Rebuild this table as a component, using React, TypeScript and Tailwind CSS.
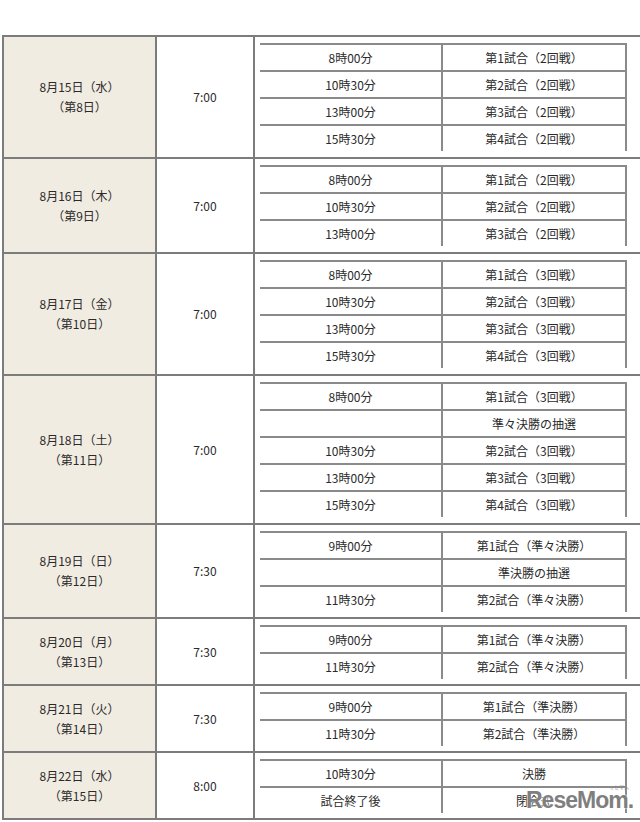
import React from 'react';

type Day = {
  date: string;
  nth: string;
  open: string;
  games: [string, string][];
};

const days: Day[] = [
  {
    date: '8月15日（水）',
    nth: '（第8日）',
    open: '7:00',
    games: [
      ['8時00分', '第1試合（2回戦）'],
      ['10時30分', '第2試合（2回戦）'],
      ['13時00分', '第3試合（2回戦）'],
      ['15時30分', '第4試合（2回戦）'],
    ],
  },
  {
    date: '8月16日（木）',
    nth: '（第9日）',
    open: '7:00',
    games: [
      ['8時00分', '第1試合（2回戦）'],
      ['10時30分', '第2試合（2回戦）'],
      ['13時00分', '第3試合（2回戦）'],
    ],
  },
  {
    date: '8月17日（金）',
    nth: '（第10日）',
    open: '7:00',
    games: [
      ['8時00分', '第1試合（3回戦）'],
      ['10時30分', '第2試合（3回戦）'],
      ['13時00分', '第3試合（3回戦）'],
      ['15時30分', '第4試合（3回戦）'],
    ],
  },
  {
    date: '8月18日（土）',
    nth: '（第11日）',
    open: '7:00',
    games: [
      ['8時00分', '第1試合（3回戦）'],
      ['', '準々決勝の抽選'],
      ['10時30分', '第2試合（3回戦）'],
      ['13時00分', '第3試合（3回戦）'],
      ['15時30分', '第4試合（3回戦）'],
    ],
  },
  {
    date: '8月19日（日）',
    nth: '（第12日）',
    open: '7:30',
    games: [
      ['9時00分', '第1試合（準々決勝）'],
      ['', '準決勝の抽選'],
      ['11時30分', '第2試合（準々決勝）'],
    ],
  },
  {
    date: '8月20日（月）',
    nth: '（第13日）',
    open: '7:30',
    games: [
      ['9時00分', '第1試合（準々決勝）'],
      ['11時30分', '第2試合（準々決勝）'],
    ],
  },
  {
    date: '8月21日（火）',
    nth: '（第14日）',
    open: '7:30',
    games: [
      ['9時00分', '第1試合（準決勝）'],
      ['11時30分', '第2試合（準決勝）'],
    ],
  },
  {
    date: '8月22日（水）',
    nth: '（第15日）',
    open: '8:00',
    games: [
      ['10時30分', '決勝'],
      ['試合終了後', '閉会式'],
    ],
  },
];

// one day of the schedule: date cell, opening time, nested game table
function DayRow({ day, tight }: { day: Day; tight?: boolean }) {
  return (
    <div className="flex border-b-2 border-[#7c7c7c]">
      <div className="w-[153px] shrink-0 bg-[#f1ece2] border-r-2 border-[#7c7c7c] flex flex-col items-center justify-center leading-[20px]">
        <span>{day.date}</span>
        <span>{day.nth}</span>
      </div>
      <div className="w-[98px] shrink-0 border-r-2 border-[#7c7c7c] flex items-center justify-center">
        {day.open}
      </div>
      <div className={tight ? 'flex-1 pl-[5px] pt-[6px] pb-[5px]' : 'flex-1 pl-[5px] pt-[6px] pb-[6px]'}>
        <div className="w-[367px]">
          {day.games.map(([time, label], i) => (
            <div key={i} className="flex h-[27px] border-t-2 border-[#8a8a8a]">
              <div className="w-[183px] border-r-2 border-[#8a8a8a] flex items-center justify-center">
                {time}
              </div>
              <div className="w-[184px] border-r-2 border-[#8a8a8a] flex items-center justify-center">
                {label}
              </div>
            </div>
          ))}
        </div>
      </div>
    </div>
  );
}

export default function App() {
  return (
    <div
      className="relative w-[640px] h-[822px] overflow-hidden bg-white text-[12px] text-[#2a2a2a]"
      style={{ fontFamily: '"Noto Sans CJK JP", "Noto Sans", sans-serif' }}
    >
      <div className="pt-[35px] pl-[2px]">
        <div className="w-[670px] border-l-2 border-t-2 border-[#7c7c7c]">
          {days.map((d, i) => (
            <DayRow key={d.date} day={d} tight={i >= 4} />
          ))}
        </div>
      </div>

      {/* watermark */}
      <div className="absolute left-[526px] top-[784px] flex flex-col items-end">
        <span className="text-[5px] leading-[5px] text-[#8a8a8a] pr-[4px]">リセマム</span>
        <span
          className="text-[23px] leading-[22px] font-bold tracking-[-1px] text-[#7f7f7f]"
          style={{
            fontFamily: '"Liberation Sans", Arial, sans-serif',
            textShadow: '0 0 2px #fff, 0 0 2px #fff',
          }}
        >
          ReseMom.
        </span>
      </div>
    </div>
  );
}
